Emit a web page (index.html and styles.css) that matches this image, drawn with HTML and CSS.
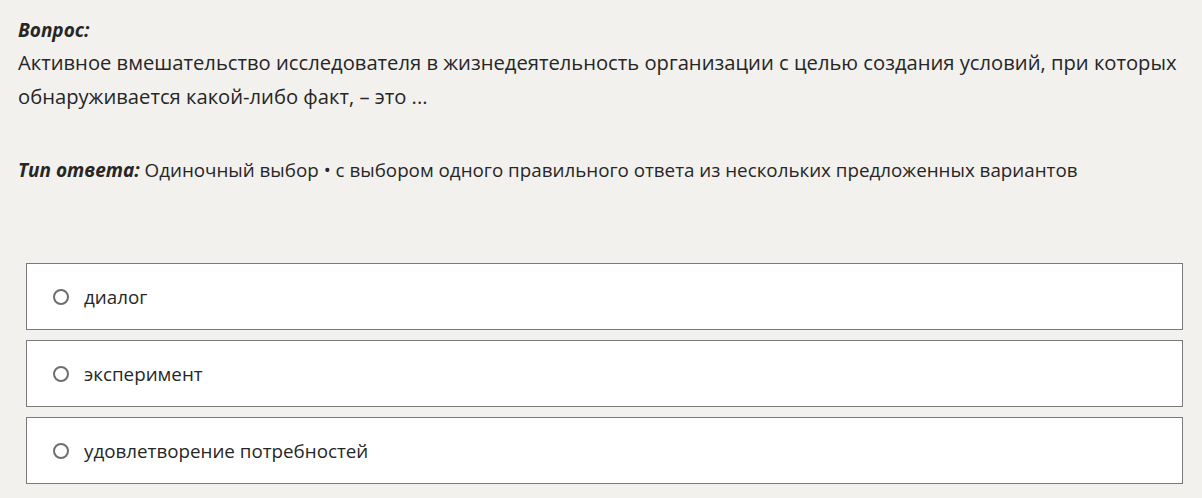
FILE: index.html
```html
<!DOCTYPE html>
<html lang="ru">
<head>
  <meta charset="UTF-8">
  <title>Вопрос</title>
  <link rel="stylesheet" href="styles.css">
</head>
<body>

  <div class="question">
    <div class="label">Вопрос:</div>
    <div class="question-text">Активное вмешательство исследователя в жизнедеятельность организации с целью создания условий, при которых обнаруживается какой-либо факт, – это ...</div>
  </div>

  <div class="answer-type">
    <span class="label">Тип ответа:</span> Одиночный выбор • с выбором одного правильного ответа из нескольких предложенных вариантов
  </div>

  <div class="options">
    <label class="option"><span class="radio"></span>диалог</label>
    <label class="option"><span class="radio"></span>эксперимент</label>
    <label class="option"><span class="radio"></span>удовлетворение потребностей</label>
  </div>

</body>
</html>
```

FILE: styles.css
```css
body {
  font-family: 'Open Sans', 'Noto Sans', sans-serif;
  background-color: #f2f1ee;
  color: #262626;
  margin: 0;
  padding: 17px 18px 0 18px;
}

.label {
  font-weight: bold;
  font-style: italic;
  font-size: 19px;
}

.question-text {
  margin-top: 2px;
  font-size: 20.2px;
  line-height: 34px;
}

.answer-type {
  margin-top: 44px;
  font-size: 18.8px;
}

.options {
  margin-top: 80px;
  margin-left: 8px;
  margin-right: 1px;
  display: flex;
  flex-direction: column;
  gap: 10px;
}

.option {
  display: flex;
  align-items: center;
  height: 67px;
  box-sizing: border-box;
  background-color: #fff;
  border: 1px solid #7a7a7a;
  padding-left: 26px;
  font-size: 18.8px;
}

.radio {
  width: 12px;
  height: 12px;
  border: 2px solid #6e6e6e;
  border-radius: 50%;
  margin-right: 15px;
}
```
